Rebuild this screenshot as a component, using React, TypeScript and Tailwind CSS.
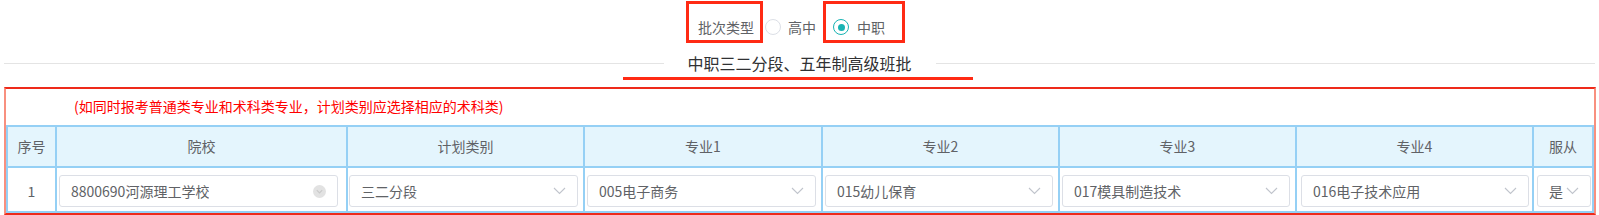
import React from "react";

const Chevron = () => (
  <svg width="13" height="8" viewBox="0 0 13 8" fill="none">
    <path d="M1 1 L6.5 6.5 L12 1" stroke="#c0c4cc" strokeWidth="1.1" />
  </svg>
);

const ClearCircle = () => (
  <svg width="13" height="13" viewBox="0 0 13 13" fill="none">
    <circle cx="6.5" cy="6.5" r="6.5" fill="#e2e2e2" />
    <path d="M3.8 5.2 L6.5 8 L9.2 5.2" stroke="#c9c9c9" strokeWidth="1.1" />
  </svg>
);

type Cell = { text: string; clear?: boolean };

const SelectBox = ({ text, clear, wrapCls }: Cell & { wrapCls: string }) => (
  <div className={wrapCls}>
    <div className="flex h-[32px] w-full items-center justify-between rounded-[3px] border border-[#dcdfe6] bg-white pl-[11px] pr-[11px]">
      <span className="truncate text-[14px] text-[#606266]">{text}</span>
      <span className="flex shrink-0 items-center">{clear ? <ClearCircle /> : <Chevron />}</span>
    </div>
  </div>
);

export default function App() {
  const headers = ["序号", "院校", "计划类别", "专业1", "专业2", "专业3", "专业4", "服从"];
  const cols = "grid grid-cols-[49px_291px_237px_238px_237px_237px_237px_60px]";
  return (
    <div
      className="relative h-[215px] w-[1599px] overflow-hidden bg-white"
      style={{ fontFamily: '"Noto Sans CJK SC", "Noto Sans", sans-serif' }}
    >
      {/* batch type row */}
      <div className="flex h-[44px] justify-center">
        <div className="mr-[8px] flex items-start">
          <div className="mt-[1px] flex h-[42px] w-[77px] items-center border-[3px] border-[#ff2a14] pl-[9px] pt-[10px]">
            <span className="text-[14px] leading-[20px] text-[#606266]">批次类型</span>
          </div>
          <div className="mt-[1px] flex h-[42px] items-center pt-[10px]">
            <span className="ml-[2px] block h-[16px] w-[16px] rounded-full border border-[#dcdfe6] bg-white" />
            <span className="ml-[7px] text-[14px] leading-[20px] text-[#606266]">高中</span>
          </div>
          <div className="ml-[7px] mt-[1px] flex h-[42px] w-[82px] items-center border-[3px] border-[#ff2a14] pl-[7px] pt-[10px]">
            <span className="flex h-[16px] w-[16px] items-center justify-center rounded-full border-[1.5px] border-[#17b3b3] bg-white">
              <span className="block h-[7px] w-[7px] rounded-full bg-[#17b3b3]" />
            </span>
            <span className="ml-[8px] text-[14px] leading-[20px] text-[#606266]">中职</span>
          </div>
        </div>
      </div>

      {/* title row */}
      <div className="mx-[4px] flex h-[38px] items-center">
        <div className="h-px flex-1 bg-[#e4e4e4]" />
        <span className="px-[24px] text-[16px] leading-[22px] text-[#303133]">中职三二分段、五年制高级班批</span>
        <div className="h-px flex-1 bg-[#e4e4e4]" />
      </div>

      {/* red underline annotation */}
      <div className="absolute left-[623px] top-[77px] h-[3px] w-[350px] bg-[#ff2a14]" />

      {/* red box */}
      <div className="ml-[4px] mt-[5px] w-[1592px] border-x-2 border-b-2 border-t-2 border-x-[#f8907f] border-b-[#ee2a1a] border-t-[#ee2a1a]">
        <div className="h-[36px] pl-[68px] pt-[4px]">
          <span className="text-[14px] leading-[20px] text-[#ff0000]">
            (如同时报考普通类专业和术科类专业，计划类别应选择相应的术科类)
          </span>
        </div>
        <div className="border-l-2 border-t-2 border-[#95d0f5]">
          <div className={cols}>
            {headers.map((h) => (
              <div
                key={h}
                className="flex h-[41px] items-center justify-center border-b-2 border-r-2 border-[#95d0f5] bg-[#e4f5fd] text-[14px] text-[#606266]"
              >
                {h}
              </div>
            ))}
          </div>
          <div className={cols}>
            <div className="flex h-[45px] items-center justify-center border-b-2 border-r-2 border-[#95d0f5] pt-[3px] text-[14px] text-[#606266]">
              1
            </div>
            {[
              { text: "8800690河源理工学校", clear: true, pad: "pl-[2px] pr-[8px]" },
              { text: "三二分段", pad: "pl-[1px] pr-[5px]" },
              { text: "005电子商务", pad: "pl-[2px] pr-[5px]" },
              { text: "015幼儿保育", pad: "pl-[2px] pr-[5px]" },
              { text: "017模具制造技术", pad: "pl-[2px] pr-[5px]" },
              { text: "016电子技术应用", pad: "pl-[4px] pr-[3px]" },
              { text: "是", pad: "pl-[3px] pr-[1px]" },
            ].map((c) => (
              <div key={c.text} className="h-[45px] border-b-2 border-r-2 border-[#95d0f5]">
                <SelectBox
                  text={c.text}
                  clear={c.clear}
                  wrapCls={`flex h-full items-start pt-[7px] ${c.pad}`}
                />
              </div>
            ))}
          </div>
        </div>
      </div>
    </div>
  );
}
